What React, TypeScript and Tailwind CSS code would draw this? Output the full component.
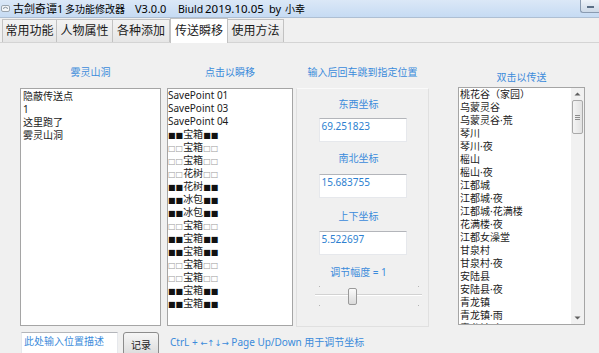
import React from "react";

type MidItem = string | { f: boolean; t: string };

const midItems: MidItem[] = [
  "SavePoint 01",
  "SavePoint 03",
  "SavePoint 04",
  { f: true, t: "宝箱" },
  { f: false, t: "宝箱" },
  { f: false, t: "宝箱" },
  { f: false, t: "花树" },
  { f: true, t: "花树" },
  { f: true, t: "冰包" },
  { f: true, t: "冰包" },
  { f: false, t: "宝箱" },
  { f: true, t: "宝箱" },
  { f: true, t: "宝箱" },
  { f: false, t: "宝箱" },
  { f: false, t: "宝箱" },
  { f: true, t: "宝箱" },
  { f: true, t: "宝箱" },
];

const rightItems = [
  "桃花谷（家园）",
  "乌蒙灵谷",
  "乌蒙灵谷·荒",
  "琴川",
  "琴川·夜",
  "榣山",
  "榣山·夜",
  "江都城",
  "江都城·夜",
  "江都城·花满楼",
  "花满楼·夜",
  "江都女澡堂",
  "甘泉村",
  "甘泉村·夜",
  "安陆县",
  "安陆县·夜",
  "青龙镇",
  "青龙镇·雨",
  "青龙镇·夜",
];

const leftItems = ["隐蔽传送点", "1", "这里跑了", "雾灵山洞"];

const tabs = [
  { t: "常用功能", w: "w-[55px]" },
  { t: "人物属性", w: "w-[57px]" },
  { t: "各种添加", w: "w-[58px]" },
  { t: "传送瞬移", w: "w-[58px]", sel: true },
  { t: "使用方法", w: "w-[57px]" },
];

function Sq({ filled }: { filled: boolean }) {
  return (
    <span
      className={
        filled
          ? "font-['DejaVu_Sans',sans-serif] text-[8px] text-[#111111]"
          : "font-['DejaVu_Sans',sans-serif] text-[8px] text-[#9a9a9a]"
      }
    >
      {filled ? "■■" : "□□"}
    </span>
  );
}

function CoordInput({ value }: { value: string }) {
  return (
    <div className="w-[88px] h-[24px] bg-white border border-[#e6e8ec] border-t-[#b3b5ba] pl-[2px] pt-px text-[10px] leading-[12px] text-[#2d7fd0] shrink-0">
      {value}
    </div>
  );
}

function GroupLabel({ children }: { children: React.ReactNode }) {
  return (
    <div className="mr-[8px] text-[10px] leading-[12px] text-[#3b8bdb] whitespace-nowrap">
      {children}
    </div>
  );
}

function Arrow({ up }: { up: boolean }) {
  return (
    <svg width="7" height="4" viewBox="0 0 7 4">
      {up ? (
        <path d="M0.5 3.5 L3.5 0.5 L6.5 3.5 Z" fill="#606060" />
      ) : (
        <path d="M0.5 0.5 L3.5 3.5 L6.5 0.5 Z" fill="#606060" />
      )}
    </svg>
  );
}

export default function App() {
  return (
    <div className="w-[599px] h-[353px] overflow-hidden bg-[#f0f0f0] font-['Noto_Sans','Noto_Sans_CJK_SC',sans-serif] text-[#1a1a1a] flex flex-col">
      {/* Title bar */}
      <div className="h-[18px] shrink-0 flex items-center bg-gradient-to-b from-[#dbe8f7] to-[#c6dbf3] border-b border-[#aebfd3] text-[11px] leading-[14px] text-black whitespace-nowrap">
        <svg width="10" height="9" viewBox="0 0 10 9" className="ml-[1px] shrink-0">
          <rect x="0.5" y="1.5" width="8" height="6" rx="1.5" fill="#f4f6f8" stroke="#9aa4ae" />
          <path d="M2 4.5 Q4.5 2 7 4.5" stroke="#7d8c99" fill="none" />
        </svg>
        <span className="ml-[2px] w-[52px] shrink-0">古剑奇谭1</span>
        <span className="w-[70px] shrink-0 text-[10px]">多功能修改器</span>
        <span className="w-[43px] shrink-0">V3.0.0</span>
        <span className="w-[27px] shrink-0 text-[10.5px]">Biuld</span>
        <span className="w-[64px] shrink-0 text-[11.5px]">2019.10.05</span>
        <span className="w-[16px] shrink-0">by</span>
        <span className="text-[10px]">小幸</span>
        <div className="ml-auto self-start w-[19px] h-[13px] rounded-bl-[3px] border-l border-b border-[#8a9bb1] bg-gradient-to-b from-[#eef3f9] to-[#cdd9e7] flex items-center justify-center">
          <div className="w-[7px] h-[2px] bg-[#5b6f86] mt-[2px]" />
        </div>
      </div>

      {/* Tab strip */}
      <div className="h-[25px] shrink-0 flex items-end pl-[2px] border-b border-[#d4d4d4]">
        {tabs.map((tab) =>
          tab.sel ? (
            <div
              key={tab.t}
              className={`${tab.w} h-[25px] -mb-px bg-white border border-b-0 border-[#c2c2c2] flex items-center justify-center text-[12px] leading-[14px] text-[#1a1a1a]`}
            >
              {tab.t}
            </div>
          ) : (
            <div
              key={tab.t}
              className={`${tab.w} h-[23px] bg-gradient-to-b from-[#f3f3f3] to-[#e6e6e6] border border-b-0 border-[#c2c2c2] -ml-px first:ml-0 flex items-center justify-center text-[12px] leading-[14px] text-[#1a1a1a]`}
            >
              {tab.t}
            </div>
          )
        )}
      </div>

      {/* Main content */}
      <div className="h-[284px] shrink-0 flex pl-[20px]">
        {/* Column 1 */}
        <div className="w-[141px] flex flex-col shrink-0">
          <div className="h-[45px] pt-[23px] text-center text-[10px] leading-[12px] text-[#3b8bdb]">
            雾灵山洞
          </div>
          <div className="h-[238px] bg-white border border-[#a5a5a5] pl-[2px] pt-px text-[10px] leading-[13px] text-[#1a1a1a] overflow-hidden">
            {leftItems.map((it) => (
              <div key={it} className="h-[13px] whitespace-nowrap">
                {it}
              </div>
            ))}
          </div>
        </div>

        {/* Column 2 */}
        <div className="w-[126px] ml-[6px] flex flex-col shrink-0">
          <div className="h-[45px] pt-[23px] text-center text-[10px] leading-[12px] text-[#3b8bdb]">
            点击以瞬移
          </div>
          <div className="h-[238px] bg-white border border-[#a5a5a5] text-[10px] leading-[13px] text-[#1a1a1a] overflow-hidden">
            {midItems.map((it, i) => (
              <div key={i} className="h-[13px] whitespace-nowrap">
                {typeof it === "string" ? (
                  it
                ) : (
                  <>
                    <Sq filled={it.f} />
                    {it.t}
                    <Sq filled={it.f} />
                  </>
                )}
              </div>
            ))}
          </div>
        </div>

        {/* Column 3 */}
        <div className="w-[133px] ml-[3px] flex flex-col shrink-0">
          <div className="h-[45px] pt-[23px] text-center text-[10px] leading-[12px] text-[#3b8bdb] whitespace-nowrap">
            输入后回车跳到指定位置
          </div>
          <div className="h-[239px] border border-[#e0e0e0] border-t-[#fafafa] flex flex-col items-center pt-[9px]">
            <GroupLabel>东西坐标</GroupLabel>
            <div className="mt-[8px]">
              <CoordInput value="69.251823" />
            </div>
            <div className="mt-[10px]">
              <GroupLabel>南北坐标</GroupLabel>
            </div>
            <div className="mt-[10px]">
              <CoordInput value="15.683755" />
            </div>
            <div className="mt-[12px]">
              <GroupLabel>上下坐标</GroupLabel>
            </div>
            <div className="mt-[9px]">
              <CoordInput value="5.522697" />
            </div>
            <div className="mt-[11px]">
              <GroupLabel>调节幅度 = 1</GroupLabel>
            </div>
            {/* Slider */}
            <div className="self-start ml-[18px] mt-[5px] relative w-[107px] h-[24px]">
              <div className="absolute left-[4px] top-[3px] w-px h-px bg-[#b4b4b4]" />
              <div className="absolute left-[103px] top-[3px] w-px h-px bg-[#b4b4b4]" />
              <div className="absolute left-[4px] top-[22px] w-px h-px bg-[#b4b4b4]" />
              <div className="absolute left-[103px] top-[22px] w-px h-px bg-[#b4b4b4]" />
              <div className="absolute left-0 right-0 top-[11px] h-[2px] bg-[#d2d2d2] border-b border-white" />
              <div className="absolute left-[33px] top-[5px] w-[9px] h-[17px] rounded-[2px] border border-[#9a9a9a] bg-gradient-to-b from-[#fbfbfb] to-[#dadada]" />
            </div>
          </div>
        </div>

        {/* Column 4 */}
        <div className="w-[127px] ml-[29px] flex flex-col shrink-0">
          <div className="h-[44px] pt-[28px] text-center text-[10px] leading-[12px] text-[#3b8bdb]">
            双击以传送
          </div>
          <div className="h-[238px] bg-white border border-[#a5a5a5] flex overflow-hidden">
            <div className="flex-1 pl-px text-[10px] leading-[13px] text-[#1a1a1a] overflow-hidden">
              {rightItems.map((it) => (
                <div key={it} className="h-[13px] whitespace-nowrap">
                  {it}
                </div>
              ))}
            </div>
            <div className="w-[13px] shrink-0 bg-[#f1f1f1] flex flex-col items-center">
              <div className="h-[12px] flex items-center justify-center">
                <Arrow up />
              </div>
              <div className="w-[11px] h-[34px] rounded-[2px] border border-[#a9a9a9] bg-gradient-to-r from-[#f4f4f4] to-[#e2e2e2] flex flex-col items-center justify-center gap-px">
                <div className="w-[5px] h-px bg-[#8d8d8d]" />
                <div className="w-[5px] h-px bg-[#8d8d8d]" />
                <div className="w-[5px] h-px bg-[#8d8d8d]" />
              </div>
              <div className="flex-1" />
              <div className="h-[12px] flex items-center justify-center">
                <Arrow up={false} />
              </div>
            </div>
          </div>
        </div>
      </div>

      {/* Bottom row */}
      <div className="mt-[5px] flex items-start pl-[21px]">
        <div className="w-[97px] h-[24px] bg-white border border-[#e6e8ec] border-t-[#b3b5ba] pl-[2px] pt-[2px] text-[10px] leading-[12px] text-[#3b8bdb] whitespace-nowrap overflow-hidden">
          此处输入位置描述
        </div>
        <div className="ml-[5px] w-[36px] h-[24px] rounded-[3px] border border-[#8c8c8c] bg-gradient-to-b from-[#f6f6f6] to-[#dcdcdc] flex justify-center pt-[6px] text-[10px] leading-[12px] text-[#1a1a1a]">
          记录
        </div>
        <div className="ml-[11px] pt-[4px] text-[10px] leading-[12px] text-[#3b8bdb] whitespace-nowrap">
          CtrL +{" "}
          <span className="font-['DejaVu_Sans',sans-serif] text-[8.5px]">←↑↓→</span>{" "}
          Page Up/Down 用于调节坐标
        </div>
      </div>
    </div>
  );
}
